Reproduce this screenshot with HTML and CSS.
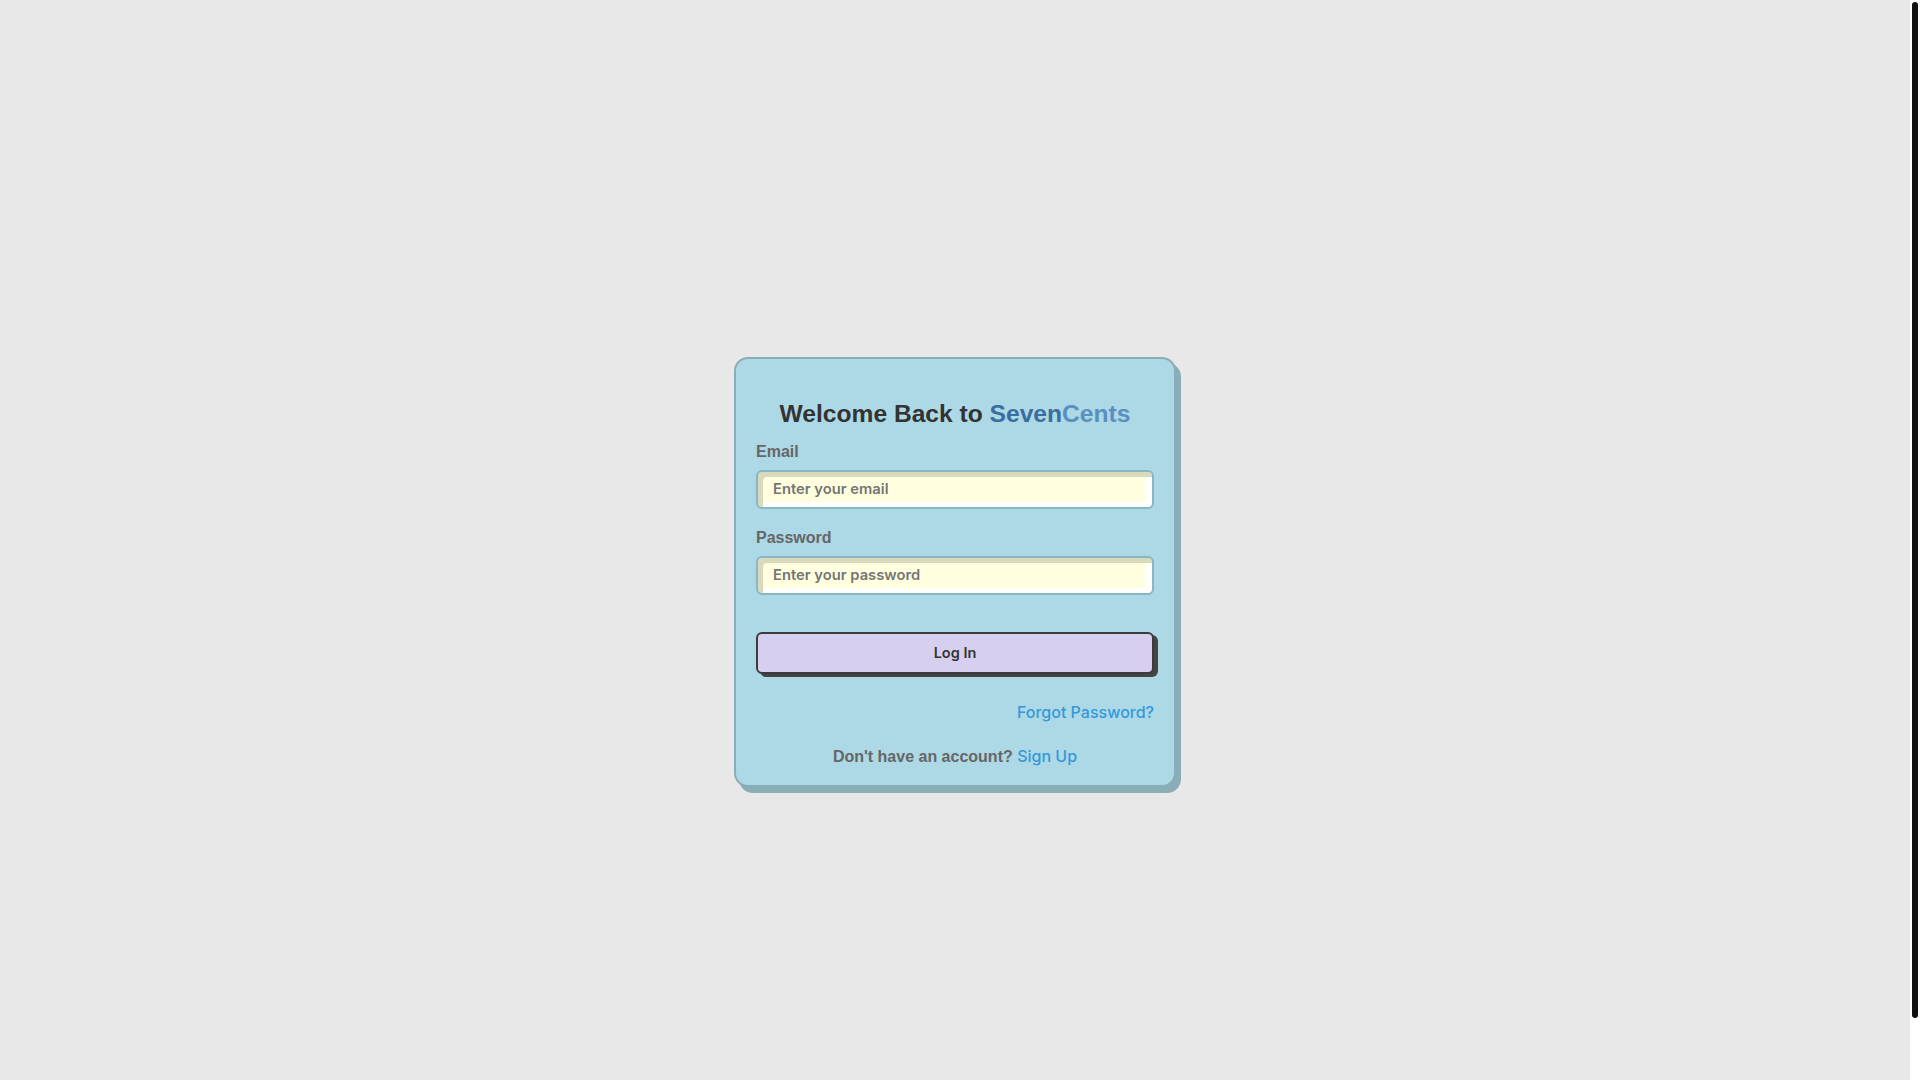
FILE: index.html
```html
<!DOCTYPE html>
<html lang="en">
<head>
<meta charset="utf-8">
<title>Log In - SevenCents</title>
<link rel="stylesheet" href="styles.css">
</head>
<body>
  <div class="page">
    <div class="page-inner">
      <main class="card">
        <h2 class="title">Welcome Back to <span class="seven">Seven</span><span class="cents">Cents</span></h2>
        <form class="form">
          <label class="label" for="email">Email</label>
          <input class="input" id="email" type="email" placeholder="Enter your email">
          <label class="label label-2" for="password">Password</label>
          <input class="input" id="password" type="password" placeholder="Enter your password">
          <button class="btn" type="button">Log In</button>
        </form>
        <div class="forgot"><a href="#">Forgot Password?</a></div>
        <p class="signup">Don't have an account? <a href="#">Sign Up</a></p>
      </main>
    </div>
  </div>
  <div class="rail" aria-hidden="true"><div class="thumb"></div></div>
</body>
</html>
```
FILE: styles.css
```css
html,
body {
  margin: 0;
  height: 100%;
  overflow: hidden;
  background: #e8e8e8;
}
body {
  display: flex;
  font-family: "Liberation Sans", Arial, sans-serif;
}
.page {
  flex: 1;
  height: 100vh;
  overflow: hidden;
  background: #e8e8e8;
}
.page-inner {
  min-height: 100vh;
  padding: 2rem;
  display: flex;
  align-items: center;
  justify-content: center;
}
.rail {
  flex: 0 0 10px;
  box-sizing: border-box;
  height: 100vh;
  padding: 2px;
  background: #ffffff;
}
.thumb {
  height: 1016px;
  background: #111111;
  border-radius: 3px;
}
.card {
  width: 398px;
  padding: 20px 20px 19px;
  background: #add8e6;
  border: 2px solid #8aaeb9;
  border-radius: 14px;
  box-shadow: 5px 6px 0 #8aadb7;
}
.title {
  margin: 20px 0 0;
  font-size: 24.6px;
  line-height: 29px;
  font-weight: 700;
  color: #333333;
  text-align: center;
}
.seven {
  color: #3b6e9f;
}
.cents {
  color: #5b8fc0;
}
.form {
  display: flex;
  flex-direction: column;
}
.label {
  display: block;
  margin-top: 15.5px;
  font-size: 16px;
  line-height: 18.5px;
  font-weight: 700;
  color: #666666;
}
.label-2 {
  margin-top: 20.5px;
}
.input {
  box-sizing: border-box;
  width: 100%;
  height: 39px;
  margin: 8px 0 0;
  padding: 0 12px 0 15px;
  border: 2px solid #89b6c3;
  border-radius: 6px;
  background: #ffffe0;
  box-shadow: inset 5px 5px 0 #d9d9bb, inset -6px -5px 0 #ffffff;
  font-family: Inter, "Noto Sans", sans-serif;
  font-size: 14.75px;
  font-weight: 600;
  color: #333;
  outline: none;
}
.input::placeholder {
  color: #757575;
}
.btn {
  box-sizing: border-box;
  width: 100%;
  height: 42px;
  margin-top: 37px;
  border: 2px solid #3b3b3b;
  border-radius: 6px;
  background: #d7cff0;
  box-shadow: 4px 3px 0 #444444;
  font-family: Inter, "Noto Sans", sans-serif;
  font-size: 14.5px;
  font-weight: 600;
  color: #333333;
  cursor: pointer;
}
.forgot {
  margin-top: 29.5px;
  text-align: right;
  font-family: Inter, "Noto Sans", sans-serif;
  font-size: 16px;
  line-height: 19.4px;
}
.forgot a,
.signup a {
  color: #3498db;
  font-family: Inter, "Noto Sans", sans-serif;
  font-weight: 500;
  text-decoration: none;
}
.signup {
  margin: 23.5px 0 0;
  text-align: center;
  font-size: 16px;
  font-weight: 700;
  color: #666666;
}
```
